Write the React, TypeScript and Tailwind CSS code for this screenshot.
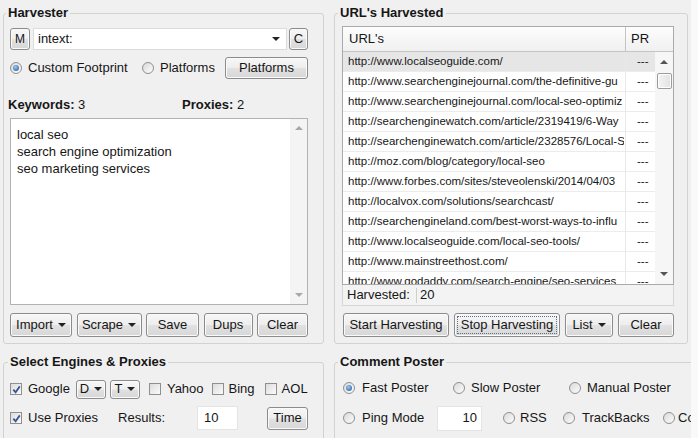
import type React from "react"

// the list column is narrow, so only the visible part of each URL is shown
const urls = [
  "http://www.localseoguide.com/",
  "http://www.searchenginejournal.com/the-definitive-gu",
  "http://www.searchenginejournal.com/local-seo-optimiz",
  "http://searchenginewatch.com/article/2319419/6-Way",
  "http://searchenginewatch.com/article/2328576/Local-S",
  "http://moz.com/blog/category/local-seo",
  "http://www.forbes.com/sites/steveolenski/2014/04/03",
  "http://localvox.com/solutions/searchcast/",
  "http://searchengineland.com/best-worst-ways-to-influ",
  "http://www.localseoguide.com/local-seo-tools/",
  "http://www.mainstreethost.com/",
  "http://www.godaddy.com/search-engine/seo-services",
]

function Caret({ color = "border-t-[#222]" }: { color?: string }) {
  return (
    <span
      className={`inline-block h-0 w-0 border-l-[4px] border-r-[4px] border-t-[4px] border-l-transparent border-r-transparent ${color}`}
    />
  )
}

function CaretUp({ color = "border-b-[#555]" }: { color?: string }) {
  return (
    <span
      className={`inline-block h-0 w-0 border-l-[4px] border-r-[4px] border-b-[4px] border-l-transparent border-r-transparent ${color}`}
    />
  )
}

function Btn({ children, className = "" }: { children: React.ReactNode; className?: string }) {
  return (
    <div
      className={`relative flex shrink-0 items-center justify-center gap-[5px] rounded-[3px] border border-[#8c8c8c] bg-[linear-gradient(#f7f7f7,#eeeeee_48%,#e1e1e1_52%,#d7d7d7)] shadow-[inset_0_0_0_1px_#fafafa] ${className}`}
    >
      {children}
    </div>
  )
}

function Radio({ on }: { on?: boolean }) {
  return (
    <span className="flex h-[12px] w-[12px] shrink-0 items-center justify-center rounded-full border border-[#8f8f8f] bg-[linear-gradient(135deg,#d9d9d9,#fdfdfd)]">
      {on && <span className="h-[6px] w-[6px] rounded-full bg-[radial-gradient(circle_at_40%_35%,#9cc9ee,#1d5797)]" />}
    </span>
  )
}

function Check({ on }: { on?: boolean }) {
  return (
    <span className="flex h-[12px] w-[12px] shrink-0 items-center justify-center border border-[#8f8f8f] bg-[linear-gradient(135deg,#dcdcdc,#fbfbfb)]">
      {on && (
        <svg width="9" height="9" viewBox="0 0 9 9">
          <path d="M1.3 4.6 L3.6 7.2 L7.8 1.4" fill="none" stroke="#3a5796" strokeWidth="1.8" />
        </svg>
      )}
    </span>
  )
}

function Opt({ on, label, gap, width }: { on?: boolean; label: string; gap: string; width: string }) {
  return (
    <span className={`flex shrink-0 items-center whitespace-nowrap ${width}`}>
      <Radio on={on} />
      <span className={gap}>{label}</span>
    </span>
  )
}

export default function App() {
  return (
    <div className="flex h-[438px] w-[698px] overflow-hidden bg-[#f0f0f0] font-['Liberation_Sans',Arial,Helvetica,sans-serif] text-[13px] text-[#161616]">
      <div className="w-[691px] shrink-0 overflow-hidden">
        {/* top groups */}
        <div className="flex pl-[3px] pt-[5px]">
          <fieldset className="h-[339px] w-[321px] min-w-0 shrink-0 rounded-[3px] border border-[#d2d2d2]">
            <legend className="ml-[2px] px-[2px] font-bold leading-[16px]">Harvester</legend>
            <div className="ml-[6px] w-[298px]">
              <div className="mt-[7px] flex h-[22px]">
                <Btn className="w-[20px] text-[12px]">M</Btn>
                <div className="ml-[3px] flex w-[254px] items-center border border-[#dcdcdc] bg-white pl-[4px] pr-[6px]">
                  <span className="flex-1">intext:</span>
                  <Caret />
                </div>
                <Btn className="ml-[2px] w-[19px]">C</Btn>
              </div>
              <div className="mt-[7px] flex h-[22px] items-center">
                <Radio on />
                <span className="ml-[6px] w-[114px]">Custom Footprint</span>
                <Radio />
                <span className="ml-[6px]">Platforms</span>
                <Btn className="ml-auto h-[22px] w-[83px]">Platforms</Btn>
              </div>
              <div className="-ml-[2px] mt-[18px] flex h-[16px] leading-[16px]">
                <span className="w-[174px]">
                  <b>Keywords:</b> 3
                </span>
                <span>
                  <b>Proxies:</b> 2
                </span>
              </div>
              <div className="mt-[5px] flex h-[187px] border border-[#b2b2b2] bg-white">
                <div className="flex-1 pl-[6px] pt-[7px] leading-[17px]">
                  <div>local seo</div>
                  <div>search engine optimization</div>
                  <div>seo marketing services</div>
                </div>
                <div className="flex w-[17px] flex-col items-center justify-between bg-[#f4f4f4] py-[7px]">
                  <CaretUp color="border-b-[#a8a8a8]" />
                  <Caret color="border-t-[#a8a8a8]" />
                </div>
              </div>
              <div className="mt-[8px] flex h-[24px] justify-between">
                <Btn className="w-[62px]">
                  Import <Caret />
                </Btn>
                <Btn className="w-[65px]">
                  Scrape <Caret />
                </Btn>
                <Btn className="w-[53px]">Save</Btn>
                <Btn className="w-[49px]">Dups</Btn>
                <Btn className="w-[51px]">Clear</Btn>
              </div>
            </div>
          </fieldset>

          <fieldset className="ml-[10px] h-[339px] w-[354px] min-w-0 shrink-0 rounded-[3px] border border-[#d2d2d2]">
            <legend className="ml-[3px] px-[2px] font-bold leading-[16px]">URL's Harvested</legend>
            <div className="ml-[7px] w-[332px]">
              <div className="mt-[5px] border border-[#aaaaaa] bg-white">
                <div className="flex h-[25px] border-b border-[#c4c4c4] bg-[linear-gradient(#fdfdfd,#f0f0f0)] leading-[24px]">
                  <div className="w-[283px] border-r border-[#c4c4c4] pl-[6px]">URL's</div>
                  <div className="pl-[5px]">PR</div>
                </div>
                <div className="flex h-[232px] overflow-hidden">
                  <div className="w-[312px]">
                    {urls.map((u, i) => (
                      <div
                        key={u}
                        className={`flex h-[20px] border-b border-[#ececec] text-[11.5px] leading-[19px] ${
                          i === 0 ? "bg-[#e6e6e6]" : ""
                        }`}
                      >
                        <div className="w-[283px] shrink-0 overflow-hidden border-r border-[#e8e8e8] pl-[5px]">
                          <div className="w-[276px] overflow-hidden whitespace-nowrap">{u}</div>
                        </div>
                        <div className="pl-[11px]">---</div>
                      </div>
                    ))}
                  </div>
                  <div className="flex w-[18px] flex-col items-center bg-[#f6f6f6]">
                    <div className="flex h-[20px] items-center">
                      <CaretUp />
                    </div>
                    <div className="mt-[1px] h-[16px] w-[15px] rounded-[2px] border border-[#9c9c9c] bg-[linear-gradient(90deg,#f4f4f4,#e2e2e2)] shadow-[inset_0_0_0_1px_#ffffff]" />
                    <div className="flex-1" />
                    <div className="flex h-[20px] items-center">
                      <Caret color="border-t-[#555]" />
                    </div>
                  </div>
                </div>
              </div>
              <div className="flex h-[21px] items-center border-x border-b border-[#d6d6d6] bg-[#f3f3f3] pl-[4px]">
                <span className="w-[69px]">Harvested:</span>
                <span className="h-[15px] border-l border-[#cfcfcf]" />
                <span className="pl-[3px]">20</span>
              </div>
              <div className="mt-[7px] flex h-[24px] gap-[5px] pl-[1px]">
                <Btn className="w-[106px]">Start Harvesting</Btn>
                <Btn className="w-[106px] border-[#3c7fb1] bg-[linear-gradient(#f3f8fb,#e8f1f8_48%,#d8e8f4_52%,#cde2f1)]">
                  <span className="absolute inset-[2px] border border-dotted border-[#5b6f88]" />
                  Stop Harvesting
                </Btn>
                <Btn className="w-[48px]">
                  List <Caret />
                </Btn>
                <Btn className="w-[56px]">Clear</Btn>
              </div>
            </div>
          </fieldset>
        </div>

        {/* bottom groups */}
        <div className="mt-[10px] flex pl-[3px]">
          <fieldset className="h-[120px] w-[321px] min-w-0 shrink-0 rounded-[3px] border border-[#d2d2d2]">
            <legend className="ml-[4px] px-[2px] font-bold leading-[16px]">Select Engines &amp; Proxies</legend>
            <div className="ml-[6px]">
              <div className="mt-[9px] flex h-[20px] items-center">
                <Check on />
                <span className="ml-[6px]">Google</span>
                <Btn className="ml-[6px] h-[19px] w-[30px] gap-[3px] rounded-[2px] border-[#8a8a8a]">
                  D <Caret />
                </Btn>
                <Btn className="ml-[4px] h-[19px] w-[30px] gap-[3px] rounded-[2px] border-[#8a8a8a]">
                  T <Caret />
                </Btn>
                <span className="ml-[9px]">
                  <Check />
                </span>
                <span className="ml-[6px]">Yahoo</span>
                <span className="ml-[8px]">
                  <Check />
                </span>
                <span className="ml-[5px]">Bing</span>
                <span className="ml-[10px]">
                  <Check />
                </span>
                <span className="ml-[5px]">AOL</span>
              </div>
              <div className="mt-[7px] flex h-[24px] items-center">
                <Check on />
                <span className="ml-[6px]">Use Proxies</span>
                <span className="ml-[20px]">Results:</span>
                <div className="ml-[32px] flex h-[24px] w-[41px] items-center border border-[#e4e4e4] bg-white pl-[6px]">10</div>
                <Btn className="ml-[29px] h-[23px] w-[41px]">Time</Btn>
              </div>
            </div>
          </fieldset>

          <fieldset className="ml-[10px] h-[120px] w-[360px] min-w-0 shrink-0 rounded-[3px] border border-[#d2d2d2]">
            <legend className="ml-[3px] px-[2px] font-bold leading-[16px]">Comment Poster</legend>
            <div className="ml-[8px] overflow-hidden">
              <div className="mt-[8px] flex h-[20px] items-center">
                <Opt on label="Fast Poster" gap="ml-[7px]" width="w-[110px]" />
                <Opt label="Slow Poster" gap="ml-[6px]" width="w-[116px]" />
                <Opt label="Manual Poster" gap="ml-[6px]" width="w-[110px]" />
              </div>
              <div className="mt-[7px] flex h-[26px] items-center">
                <Opt label="Ping Mode" gap="ml-[7px]" width="w-[94px]" />
                <div className="flex h-[25px] w-[45px] shrink-0 items-center justify-end border border-[#e4e4e4] bg-white pr-[4px]">
                  10
                </div>
                <span className="w-[21px] shrink-0" />
                <Opt label="RSS" gap="ml-[5px]" width="w-[60px]" />
                <Opt label="TrackBacks" gap="ml-[7px]" width="w-[100px]" />
                <Opt label="Comments" gap="ml-[3px]" width="w-[90px]" />
              </div>
            </div>
          </fieldset>
        </div>
      </div>
      <div className="flex-1 bg-[#f9f9f9]" />
    </div>
  )
}
